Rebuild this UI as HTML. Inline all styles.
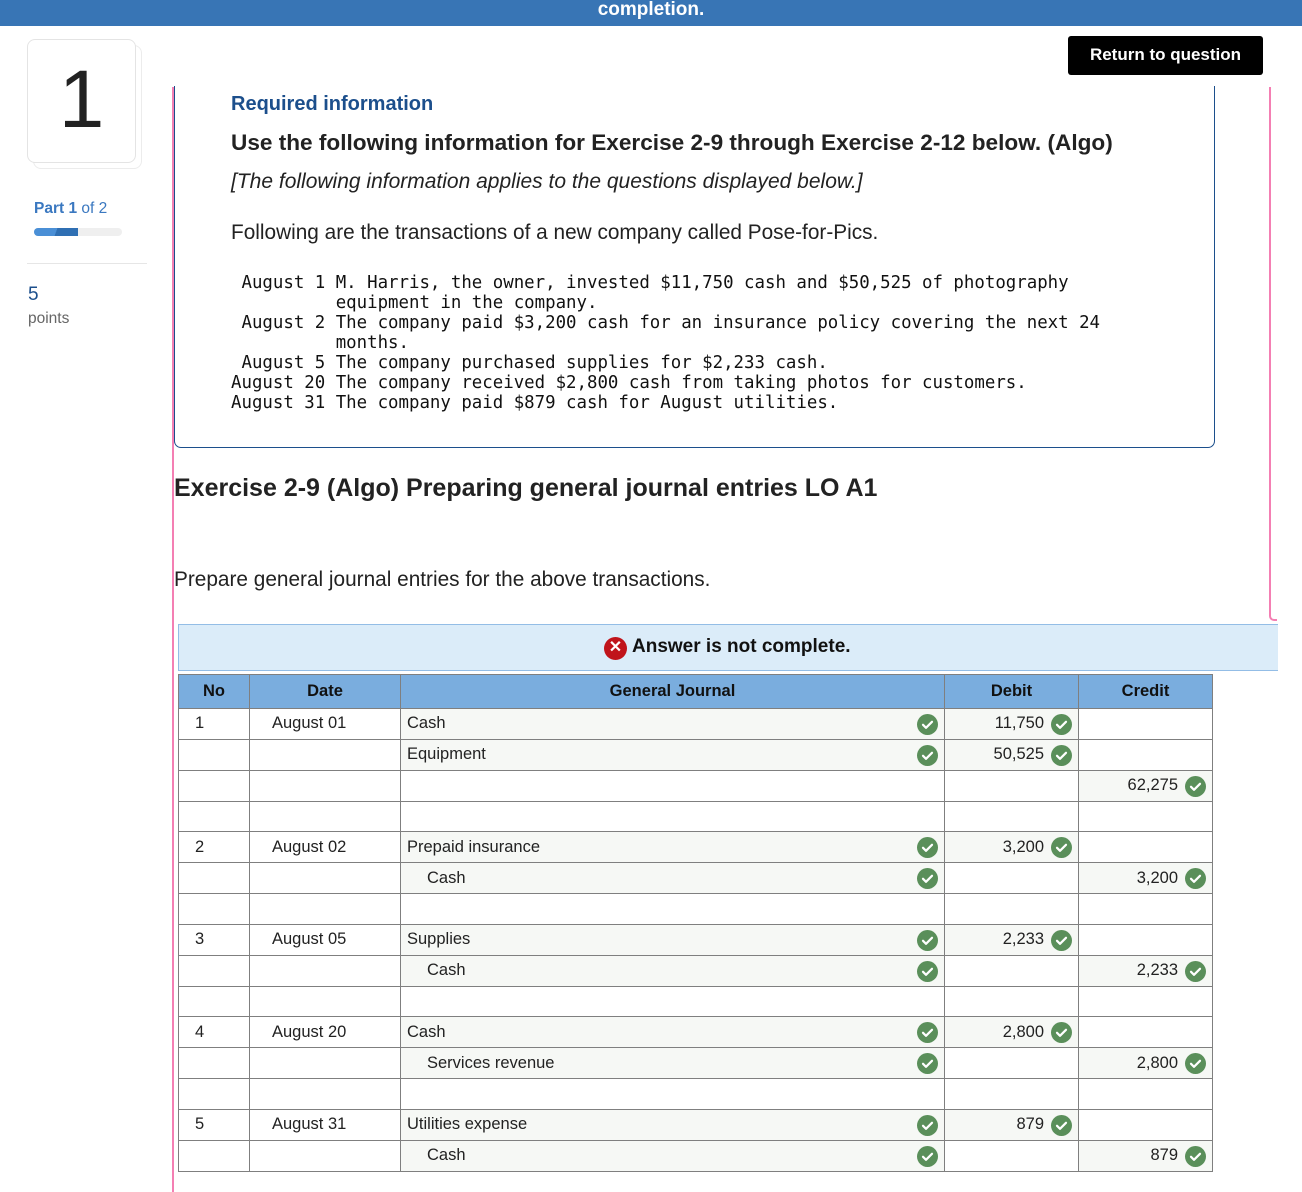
<!DOCTYPE html>
<html><head><meta charset="utf-8">
<style>
*{margin:0;padding:0;box-sizing:border-box}
body{width:1302px;height:1192px;overflow:hidden;background:#fff;font-family:"Liberation Sans",sans-serif;color:#222;position:relative}
.abs{position:absolute}
.topbar{left:0;top:0;width:1302px;height:26px;background:#3875b5;color:#fff;font-weight:bold;font-size:19px;text-align:center;line-height:20px}
.card{left:27px;top:39px;width:109px;height:124px;border:1px solid #e4e4e4;border-radius:8px;background:#fff}
.card2{left:33px;top:45px;width:109px;height:124px;border:1px solid #ececec;border-radius:8px;background:#fff}
.num{left:27px;top:52px;width:109px;text-align:center;font-size:82px;color:#222;line-height:96px}
.pink{background:#f47fb3}
.pre{font-family:"DejaVu Sans Mono","Liberation Mono",monospace;font-size:17.4px;line-height:20px;white-space:pre;color:#111}
table{border-collapse:collapse;table-layout:fixed;position:absolute;left:178px;top:674px;width:1034px;font-size:16.5px}
td,th{border:1.5px solid #7f7f7f;height:30.85px;padding:0 6px;vertical-align:middle;position:relative}
th{background:#7aadde;height:34px;font-weight:bold;color:#111}
.s{background:#f6f8f5}
.r{text-align:right;padding-right:34px}
.ck{position:absolute;right:6px;top:5px;width:21px;height:21px}
.gk{padding-right:34px}
.ind{padding-left:26px}
.n{padding-left:16px}
</style></head><body>
<div class="abs topbar">completion.</div>
<div class="abs" style="left:1068px;top:36px;width:195px;height:39px;background:#000;border-radius:3px;color:#fff;font-weight:bold;font-size:17px;text-align:center;line-height:38px">Return to question</div>

<div class="abs card2"></div>
<div class="abs card"></div>
<div class="abs num">1</div>
<div class="abs" style="left:34px;top:200px;font-size:15.5px;color:#3a78c0"><b>Part 1</b> of 2</div>
<div class="abs" style="left:34px;top:228px;width:88px;height:8px;border-radius:4px;background:#efefef"></div>
<div class="abs" style="left:34px;top:228px;width:44px;height:8px;border-radius:4px 0 0 4px;background:linear-gradient(110deg,#4a8fd6 50%,#2f6fb3 50%)"></div>
<div class="abs" style="left:27px;top:263px;width:120px;height:1px;background:#e6e6e6"></div>
<div class="abs" style="left:28px;top:284px;font-size:19px;color:#1c4f8c">5</div>
<div class="abs" style="left:28px;top:310px;font-size:15.5px;color:#666">points</div>

<div class="abs pink" style="left:172px;top:87px;width:2px;height:1105px"></div>
<div class="abs" style="left:1269px;top:87px;width:8px;height:534px;border-left:2px solid #f47fb3;border-bottom:2px solid #f47fb3;border-bottom-left-radius:5px"></div>

<div class="abs" style="left:174px;top:86px;width:1041px;height:362px;border:1.5px solid #1c4f8c;border-top:none;border-radius:0 0 7px 7px"></div>
<div class="abs" style="left:231px;top:93px;font-size:20px;font-weight:bold;color:#1c4f8c">Required information</div>
<div class="abs" style="left:231px;top:130px;font-size:22.6px;font-weight:bold;color:#222">Use the following information for Exercise 2-9 through Exercise 2-12 below. (Algo)</div>
<div class="abs" style="left:231px;top:170px;font-size:21px;font-style:italic;color:#222">[The following information applies to the questions displayed below.]</div>
<div class="abs" style="left:231px;top:221px;font-size:20.8px;color:#222">Following are the transactions of a new company called Pose-for-Pics.</div>
<div class="abs pre" style="left:231px;top:273px"> August 1 M. Harris, the owner, invested $11,750 cash and $50,525 of photography
          equipment in the company.
 August 2 The company paid $3,200 cash for an insurance policy covering the next 24
          months.
 August 5 The company purchased supplies for $2,233 cash.
August 20 The company received $2,800 cash from taking photos for customers.
August 31 The company paid $879 cash for August utilities.</div>

<div class="abs" style="left:174px;top:474px;font-size:25px;font-weight:bold;color:#222">Exercise 2-9 (Algo) Preparing general journal entries LO A1</div>
<div class="abs" style="left:174px;top:568px;font-size:20.8px;color:#222">Prepare general journal entries for the above transactions.</div>

<div class="abs" style="left:178px;top:624px;width:1100px;height:47px;background:#dbecf9;border:1.5px solid #93bde6;border-right:none"></div>
<div class="abs" style="left:604px;top:637px;width:23px;height:23px;border-radius:50%;background:#c0141b;color:#fff;font-size:16px;font-weight:bold;text-align:center;line-height:22px">✕</div>
<div class="abs" style="left:632px;top:636px;font-size:19px;font-weight:bold;color:#111">Answer is not complete.</div>

<svg width="0" height="0" style="position:absolute"><defs><symbol id="c" viewBox="0 0 21 21"><circle cx="10.5" cy="10.5" r="10.5" fill="#5a8f5a"/><path d="M6 10.8l3 3 6-6" stroke="#fff" stroke-width="2.2" fill="none" stroke-linecap="round" stroke-linejoin="round"/></symbol></defs></svg>

<table>
<colgroup><col style="width:71px"><col style="width:151px"><col style="width:544px"><col style="width:134px"><col style="width:134px"></colgroup>
<tr><th>No</th><th>Date</th><th>General Journal</th><th>Debit</th><th>Credit</th></tr>
<tr><td class="n">1</td><td style="padding-left:22px">August 01</td><td class="s gk">Cash<svg class="ck"><use href="#c"/></svg></td><td class="s r">11,750<svg class="ck"><use href="#c"/></svg></td><td></td></tr>
<tr><td></td><td></td><td class="s gk">Equipment<svg class="ck"><use href="#c"/></svg></td><td class="s r">50,525<svg class="ck"><use href="#c"/></svg></td><td></td></tr>
<tr><td></td><td></td><td></td><td></td><td class="s r">62,275<svg class="ck"><use href="#c"/></svg></td></tr>
<tr><td></td><td></td><td></td><td></td><td></td></tr>
<tr><td class="n">2</td><td style="padding-left:22px">August 02</td><td class="s gk">Prepaid insurance<svg class="ck"><use href="#c"/></svg></td><td class="s r">3,200<svg class="ck"><use href="#c"/></svg></td><td></td></tr>
<tr><td></td><td></td><td class="s gk ind">Cash<svg class="ck"><use href="#c"/></svg></td><td></td><td class="s r">3,200<svg class="ck"><use href="#c"/></svg></td></tr>
<tr><td></td><td></td><td></td><td></td><td></td></tr>
<tr><td class="n">3</td><td style="padding-left:22px">August 05</td><td class="s gk">Supplies<svg class="ck"><use href="#c"/></svg></td><td class="s r">2,233<svg class="ck"><use href="#c"/></svg></td><td></td></tr>
<tr><td></td><td></td><td class="s gk ind">Cash<svg class="ck"><use href="#c"/></svg></td><td></td><td class="s r">2,233<svg class="ck"><use href="#c"/></svg></td></tr>
<tr><td></td><td></td><td></td><td></td><td></td></tr>
<tr><td class="n">4</td><td style="padding-left:22px">August 20</td><td class="s gk">Cash<svg class="ck"><use href="#c"/></svg></td><td class="s r">2,800<svg class="ck"><use href="#c"/></svg></td><td></td></tr>
<tr><td></td><td></td><td class="s gk ind">Services revenue<svg class="ck"><use href="#c"/></svg></td><td></td><td class="s r">2,800<svg class="ck"><use href="#c"/></svg></td></tr>
<tr><td></td><td></td><td></td><td></td><td></td></tr>
<tr><td class="n">5</td><td style="padding-left:22px">August 31</td><td class="s gk">Utilities expense<svg class="ck"><use href="#c"/></svg></td><td class="s r">879<svg class="ck"><use href="#c"/></svg></td><td></td></tr>
<tr><td></td><td></td><td class="s gk ind">Cash<svg class="ck"><use href="#c"/></svg></td><td></td><td class="s r">879<svg class="ck"><use href="#c"/></svg></td></tr>
</table>
</body></html>
